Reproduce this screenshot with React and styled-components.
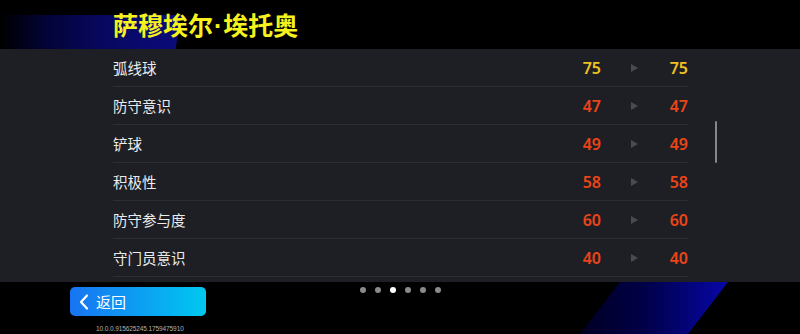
import styled, { createGlobalStyle } from 'styled-components';

const GlobalStyle = createGlobalStyle`
    html, body {
        margin: 0;
        padding: 0;
        background: #000;
    }
    body {
        font-family: "Noto Sans CJK SC", "Noto Sans", sans-serif;
        width: 800px;
        height: 334px;
        overflow: hidden;
    }
`;

const Page = styled.div`
    width: 800px;
    height: 334px;
    display: flex;
    flex-direction: column;
    background: #000;
`;

const Header = styled.div`
    position: relative;
    height: 49px;
    display: flex;
    align-items: center;
    padding-left: 113px;

    &::before {
        content: '';
        position: absolute;
        left: 0;
        top: 15px;
        width: 181px;
        height: 34px;
        background: linear-gradient(90deg, #000 0%, #030336 25%, #07075e 55%, #0b0b7c 100%);
        clip-path: polygon(0 0, 100% 0, 97% 100%, 0 100%);
    }
`;

const Title = styled.h1`
    position: relative;
    margin: 0;
    font-size: 25px;
    font-weight: 700;
    color: #f6f21e;
    letter-spacing: 0;
    line-height: 1;
    margin-top: 2px;
`;

const Interpunct = styled.span`
    font-family: "Liberation Sans", sans-serif;
    font-weight: 700;
    margin: 0 1px;
`;

const Panel = styled.div`
    position: relative;
    height: 233px;
    background: #1e1f24;
    padding: 0 112px 0 113px;
`;

const Row = styled.div`
    display: grid;
    grid-template-columns: 1fr 40px 60px 27px;
    align-items: center;
    height: 37px;
    border-bottom: 1px solid #2d2e34;
`;

const Label = styled.span`
    font-size: 14.5px;
    color: #ececec;
`;

const Value = styled.span`
    text-align: right;
    font-family: "Noto Sans", sans-serif;
    font-size: 16px;
    font-weight: 600;
    color: ${({ $high }) => ($high ? '#f1c21f' : '#ea4419')};
`;

const Arrow = styled.span`
    justify-self: start;
    margin-left: 30px;
    width: 0;
    height: 0;
    border-left: 7px solid #4a4b51;
    border-top: 4.5px solid transparent;
    border-bottom: 4.5px solid transparent;
`;

const ScrollThumb = styled.div`
    position: absolute;
    left: 715px;
    top: 72px;
    width: 2px;
    height: 42px;
    background: #85868a;
    border-radius: 1px;
`;

const Footer = styled.div`
    position: relative;
    flex: 1;
    display: grid;
    grid-template-columns: 1fr auto 1fr;
    overflow: hidden;

    &::before {
        content: '';
        position: absolute;
        left: 580px;
        top: 0;
        width: 148px;
        height: 52px;
        background: linear-gradient(90deg, #000022 0%, #00004a 45%, #0707a8 100%);
        clip-path: polygon(40px 0, 148px 0, 108px 100%, 0 100%);
    }
`;

const LeftBlock = styled.div`
    display: flex;
    flex-direction: column;
    align-items: flex-start;
    padding: 5px 0 0 70px;
`;

const BackButton = styled.button`
    width: 136px;
    height: 29px;
    border: none;
    border-radius: 5px;
    background: linear-gradient(90deg, #1774f2 0%, #0aa6f2 60%, #00c9ef 100%);
    display: flex;
    align-items: center;
    gap: 7px;
    padding: 0 0 0 9px;
    color: #fff;
    font-family: "Noto Sans CJK SC", sans-serif;
    font-size: 15px;
    cursor: pointer;
`;

const Version = styled.span`
    margin: 9px 0 0 26px;
    font-family: "Liberation Sans", sans-serif;
    font-size: 6.5px;
    color: #b4b4b4;
    letter-spacing: -0.1px;
`;

const Dots = styled.div`
    position: relative;
    display: flex;
    gap: 9px;
    padding-top: 5px;
`;

const Dot = styled.span`
    width: 6px;
    height: 6px;
    border-radius: 50%;
    background: ${({ $active }) => ($active ? '#ffffff' : '#8a8a8a')};
`;

const stats = [
    { name: '弧线球', from: 75, to: 75 },
    { name: '防守意识', from: 47, to: 47 },
    { name: '铲球', from: 49, to: 49 },
    { name: '积极性', from: 58, to: 58 },
    { name: '防守参与度', from: 60, to: 60 },
    { name: '守门员意识', from: 40, to: 40 },
];

export default function App() {
    return (
        <>
            <GlobalStyle />
            <Page>
                <Header>
                    <Title>
                        萨穆埃尔<Interpunct>·</Interpunct>埃托奥
                    </Title>
                </Header>
                <Panel>
                    {stats.map((s) => (
                        <Row key={s.name}>
                            <Label>{s.name}</Label>
                            <Value $high={s.from >= 70}>{s.from}</Value>
                            <Arrow />
                            <Value $high={s.to >= 70}>{s.to}</Value>
                        </Row>
                    ))}
                    <ScrollThumb />
                </Panel>
                <Footer>
                    <LeftBlock>
                        <BackButton>
                            <svg width="10" height="16" viewBox="0 0 10 16">
                                <polyline points="8,1.5 2,8 8,14.5" fill="none" stroke="#fff" strokeWidth="2.2" strokeLinecap="round" strokeLinejoin="round" />
                            </svg>
                            返回
                        </BackButton>
                        <Version>10.0.0.915625245.1759475910</Version>
                    </LeftBlock>
                    <Dots>
                        {[0, 1, 2, 3, 4, 5].map((i) => (
                            <Dot key={i} $active={i === 2} />
                        ))}
                    </Dots>
                    <div />
                </Footer>
            </Page>
        </>
    );
}
